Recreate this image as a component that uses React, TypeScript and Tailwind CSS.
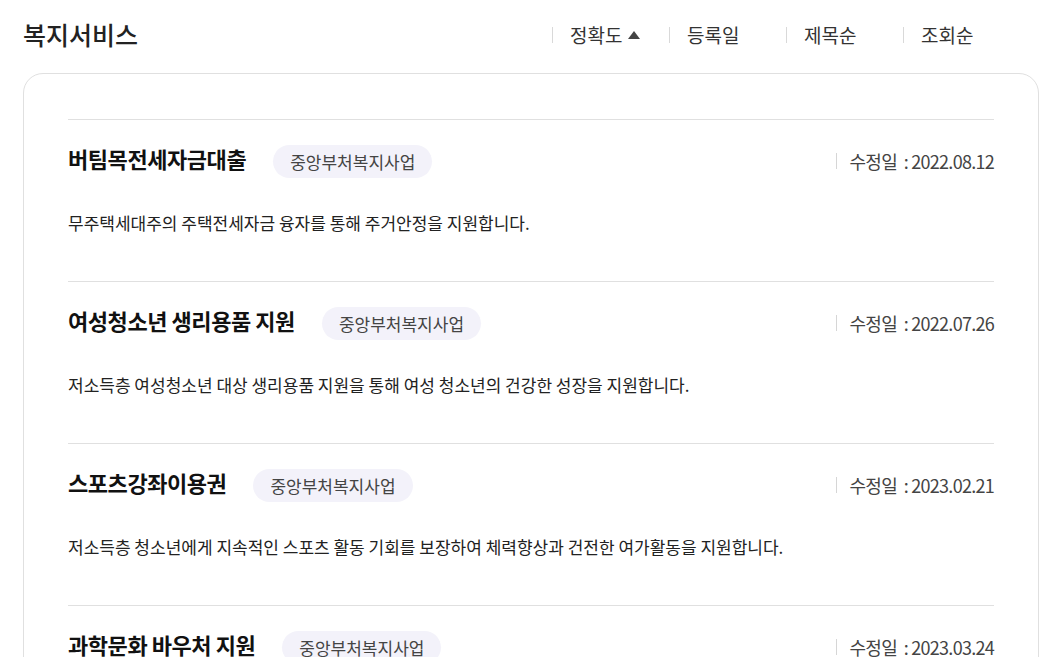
import React from 'react'

interface Service {
  title: string
  category: string
  date: string
  desc: string
}

const services: Service[] = [
  {
    title: '버팀목전세자금대출',
    category: '중앙부처복지사업',
    date: '2022.08.12',
    desc: '무주택세대주의 주택전세자금 융자를 통해 주거안정을 지원합니다.',
  },
  {
    title: '여성청소년 생리용품 지원',
    category: '중앙부처복지사업',
    date: '2022.07.26',
    desc: '저소득층 여성청소년 대상 생리용품 지원을 통해 여성 청소년의 건강한 성장을 지원합니다.',
  },
  {
    title: '스포츠강좌이용권',
    category: '중앙부처복지사업',
    date: '2023.02.21',
    desc: '저소득층 청소년에게 지속적인 스포츠 활동 기회를 보장하여 체력향상과 건전한 여가활동을 지원합니다.',
  },
  {
    title: '과학문화 바우처 지원',
    category: '중앙부처복지사업',
    date: '2023.03.24',
    desc: '저소득층 가구에 과학문화 체험 기회를 제공합니다.',
  },
]

const sorts = ['정확도', '등록일', '제목순', '조회순']

function ServiceItem({ item }: { item: Service }) {
  return (
    <li className="border-t border-[#e0e0e0] pt-[25px] pb-[46px]">
      <div className="flex items-start">
        <h3 className="text-[22px] leading-[26px] font-bold text-[#111] tracking-[-0.02em]">{item.title}</h3>
        <span className="ml-[27px] h-[33px] px-[17px] rounded-full bg-[#f3f2fa] text-[17px] leading-[33px] text-[#444]">
          {item.category}
        </span>
        <div className="ml-auto mt-[4px] flex items-center">
          <span className="w-px h-[16px] bg-[#d6d6d6]" />
          <span className="pl-[13px] text-[18px] leading-6 text-[#444] tracking-[-0.04em]">
            수정일 &nbsp;: {item.date}
          </span>
        </div>
      </div>
      <p className="mt-[33px] text-[17px] leading-6 text-[#222]">{item.desc}</p>
    </li>
  )
}

export default function App() {
  return (
    <div className="min-h-screen bg-white overflow-hidden font-['Noto_Sans_CJK_KR','Noto_Sans',sans-serif]">
      <header className="flex items-center h-[70px] pl-[23px] pr-[20px]">
        <h2 className="text-[25px] font-medium text-[#222]">복지서비스</h2>
        <ul className="ml-auto flex items-center">
          {sorts.map((s, i) => (
            <li key={s} className="flex items-center w-[117px]">
              <span className="w-px h-[16px] bg-[#d9d9d9]" />
              <span className="pl-[17px] text-[19px] text-[#333] flex items-center gap-[6px]">
                {s}
                {i === 0 && (
                  <svg width="12" height="8" viewBox="0 0 12 8">
                    <path d="M6 0 L12 8 L0 8 Z" fill="#444" />
                  </svg>
                )}
              </span>
            </li>
          ))}
        </ul>
      </header>
      <section className="ml-[23px] mt-[3px] w-[1016px] rounded-[20px] border border-[#e0e0e0] px-[44px] pt-[45px]">
        <ul>
          {services.map((s) => (
            <ServiceItem key={s.title} item={s} />
          ))}
        </ul>
      </section>
    </div>
  )
}
